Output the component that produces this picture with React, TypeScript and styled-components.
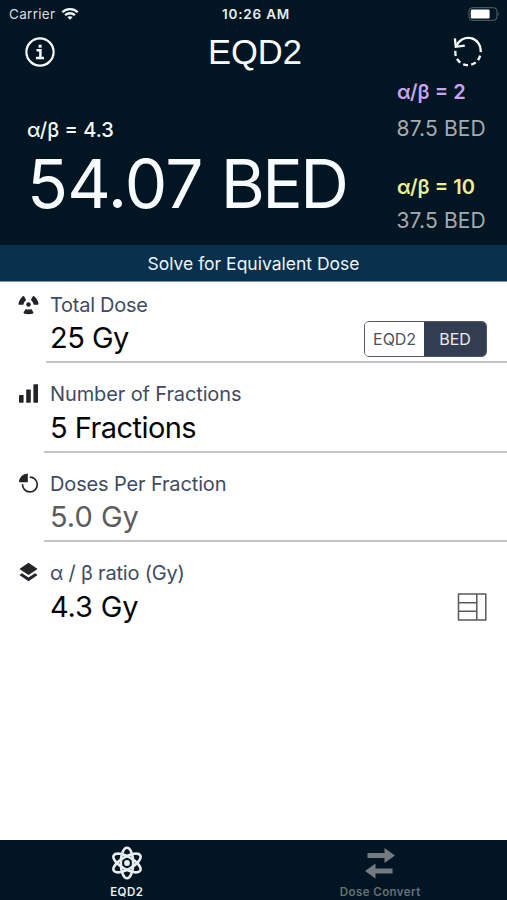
import React from 'react';
import styled, { createGlobalStyle } from 'styled-components';

const Global = createGlobalStyle`
  body { margin: 0; background: #fff; }
  * { box-sizing: border-box; }
`;

const Screen = styled.div`
  width: 507px;
  height: 900px;
  display: flex;
  flex-direction: column;
  overflow: hidden;
  background: #fff;
  font-family: Inter, sans-serif;
  font-kerning: normal;
  white-space: nowrap;
`;

const Top = styled.header`
  background: #021522;
  color: #f8fbfd;
`;

const StatusBar = styled.div`
  height: 28px;
  padding: 0 7px 0 9px;
  display: grid;
  grid-template-columns: 1fr auto 1fr;
  align-items: center;
  font-size: 13.5px;
  line-height: 28px;
`;

const Carrier = styled.span`
  display: flex;
  align-items: center;
  gap: 6px;
  letter-spacing: 0.3px;
  color: #d6dde1;
`;

const Clock = styled.span`
  padding-left: 3px;
  font-weight: 600;
  letter-spacing: 0.82px;
  color: #e6ecef;
`;

const Battery = styled.span`
  display: flex;
  justify-content: flex-end;
`;

const NavBar = styled.div`
  height: 48px;
  padding: 0 23px 0 24px;
  display: grid;
  grid-template-columns: 32px 1fr 32px;
  align-items: center;
`;

const Title = styled.h1`
  margin: 0;
  padding-left: 2px;
  font-family: "Liberation Sans", sans-serif;
  font-size: 34.5px;
  line-height: 48px;
  font-weight: 400;
  text-align: center;
`;

const IconButton = styled.button`
  width: 32px;
  height: 32px;
  padding: 0;
  border: 0;
  background: none;
  color: inherit;
  svg { display: block; }
`;

const Results = styled.section`
  height: 169px;
  display: grid;
  grid-template-columns: 370px 1fr;
  padding-left: 27px;
`;

const MainResult = styled.div`
  padding-top: 42px;
`;

const SideResults = styled.div`
  padding-top: 4px;
`;

const SideResult = styled.div<{ $gap: number }>`
  display: flex;
  flex-direction: column;
  gap: ${(p) => p.$gap}px;
  & + & { margin-top: 34px; }
`;

const RatioLabel = styled.div<{ $color?: string }>`
  font-size: 20px;
  line-height: 24px;
  font-weight: ${(p) => (p.$color ? 600 : 500)};
  color: ${(p) => p.$color ?? '#f4f8fa'};
`;

const MainValue = styled.div`
  margin-top: 2px;
  font-size: 67.5px;
  line-height: 80px;
  letter-spacing: -0.8px;
`;

const Unit = styled.span`
  letter-spacing: -2.6px;
`;

const SideValue = styled.div`
  margin-left: -0.5px;
  font-size: 21px;
  line-height: 24px;
  letter-spacing: 0.15px;
  color: #a6abae;
`;

const Banner = styled.div`
  height: 37px;
  background: #07304d;
  border-bottom: 1px solid #7f93a3;
  color: #eef4f8;
  font-size: 17.5px;
  line-height: 37px;
  text-align: center;
`;

const Form = styled.main`
  flex: 1;
  min-height: 0;
`;

const Row = styled.div<{ $first?: boolean }>`
  height: ${(p) => (p.$first ? 81 : 89.6)}px;
  display: grid;
  grid-template-columns: ${(p) => (p.$first ? 46 : 44)}px 1fr;
  align-items: end;
`;

const RowIcon = styled.div`
  height: 69.5px;
  padding-left: 18px;
  color: #222428;
  svg { display: block; }
`;

const RowBody = styled.div<{ $first?: boolean; $last?: boolean }>`
  padding: 0 20px 6px ${(p) => (p.$first ? 4 : 6)}px;
  border-bottom: 2px solid ${(p) => (p.$last ? 'transparent' : '#c4c4c6')};
`;

const Label = styled.div<{ $track: number }>`
  font-size: 20px;
  line-height: 24px;
  letter-spacing: ${(p) => p.$track}px;
  color: #3f4b62;
`;

const ValueLine = styled.div`
  height: 34px;
  margin-top: 4.5px;
  display: flex;
  justify-content: space-between;
  align-items: center;
`;

const Value = styled.div<{ $track: number; $muted?: boolean }>`
  font-size: 29px;
  line-height: 34px;
  letter-spacing: ${(p) => p.$track}px;
  color: ${(p) => (p.$muted ? '#5c5c5c' : '#050505')};
`;

const Segmented = styled.div`
  width: 123px;
  height: 36px;
  margin-top: 2px;
  display: grid;
  grid-template-columns: 59px 1fr;
  border: 1.5px solid #50586a;
  border-radius: 5px;
  overflow: hidden;
`;

const Segment = styled.button<{ $active?: boolean }>`
  border: 0;
  padding: 0;
  font: 400 16px/33px Inter, sans-serif;
  letter-spacing: -0.1px;
  background: ${(p) => (p.$active ? '#333d51' : '#fff')};
  color: ${(p) => (p.$active ? '#e9ecf2' : '#4b5263')};
`;

const TabBar = styled.nav`
  height: 60px;
  display: grid;
  grid-template-columns: 1fr 1fr;
  background: #021522;
`;

const Tab = styled.div<{ $active?: boolean }>`
  padding-top: 5px;
  display: flex;
  flex-direction: column;
  align-items: center;
  font-size: 11.5px;
  line-height: 14px;
  font-weight: 600;
  letter-spacing: 0.43px;
  color: ${(p) => (p.$active ? '#e8edf0' : '#667078')};
  svg { display: block; margin-bottom: 4px; }
`;

const WifiIcon = () => (
  <svg width="18" height="14" viewBox="0 0 18 14" fill="none" stroke="#f4f8fa" strokeWidth="2.3">
    <path d="M1.3 5.2C5.6 1 12.4 1 16.7 5.2M4.1 8.2C6.9 5.6 11.1 5.6 13.9 8.2" />
    <path d="M9 12.8L6.3 10.1C7.8 8.8 10.2 8.8 11.7 10.1Z" fill="#f4f8fa" stroke="none" />
  </svg>
);

const BatteryIcon = () => (
  <svg width="32" height="14" viewBox="0 0 32 14">
    <rect x="1" y="0.7" width="28" height="12.6" rx="3.5" fill="none" stroke="#59666f" />
    <rect x="2.8" y="2.4" width="18.8" height="9.2" rx="1.4" fill="#fff" />
    <path d="M30 4.8Q31.6 7 30 9.2Z" fill="#59666f" />
  </svg>
);

const InfoIcon = () => (
  <svg width="32" height="32" viewBox="0 0 32 32" fill="none" stroke="currentColor">
    <circle cx="16" cy="16" r="13.6" strokeWidth="2.2" />
    <path d="M12.5 14.3H16.4V21.6M12 22H20" strokeWidth="2.5" />
    <rect x="14.6" y="8.7" width="3" height="3" fill="currentColor" stroke="none" />
  </svg>
);

const ResetIcon = () => (
  <svg width="32" height="32" viewBox="0 0 32 32" fill="none" stroke="currentColor" strokeWidth="2.3">
    <path d="M2.9 2.4L3.8 10.8L12.8 9.6" />
    <path d="M4.2 10.4A12.6 12.6 0 0 1 28.6 16.2" />
    <path d="M28.1 19.6A12.6 12.6 0 0 1 3.4 14.8" strokeDasharray="5 3.2" />
  </svg>
);

const RadiationIcon = () => (
  <svg width="21" height="21" viewBox="-10.5 -10.5 21 21" fill="currentColor">
    <circle r="2.3" />
    {[0, 120, 240].map((angle) => (
      <path key={angle} transform={`rotate(${angle})`} d="M-2.8 4.4Q0 5.6 2.8 4.4L5 8.1Q5.1 9.6 0 9.8Q-5.1 9.6 -5 8.1Z" />
    ))}
  </svg>
);

const BarsIcon = () => (
  <svg width="21" height="21" viewBox="0 0 21 21" fill="currentColor">
    <rect x="1" y="12" width="4.6" height="7.8" rx="0.7" />
    <rect x="8.2" y="6.5" width="4.6" height="13.3" rx="0.7" />
    <rect x="15.4" y="1.3" width="4.6" height="18.5" rx="0.7" />
  </svg>
);

const PieIcon = () => (
  <svg width="21" height="21" viewBox="0 0 21 21">
    <path d="M9.8 0.6V9.2H1A8.8 8.6 0 0 1 9.8 0.6Z" fill="currentColor" />
    <path d="M11.8 4.1A7.4 7.4 0 1 1 4.5 11.2" fill="none" stroke="currentColor" strokeWidth="1.7" />
  </svg>
);

const LayersIcon = () => (
  <svg width="21" height="21" viewBox="0 0 21 21" fill="currentColor">
    <path d="M10.5 0.7L19.6 6.9L10.5 13.1L1.4 6.9Z" />
    <path d="M1.4 13L4 11.3L10.5 15.6L17 11.3L19.6 13L10.5 19.2Z" />
  </svg>
);

const TableIcon = () => (
  <svg width="30" height="28" viewBox="0 0 30 28" fill="none" stroke="#5a5a5c" strokeWidth="1.5">
    <path d="M1.5 1H28.8V27H1.5ZM19.8 1V27M1.5 9.8H19.8M1.5 18.2H19.8" />
  </svg>
);

const AtomIcon = () => (
  <svg width="36" height="36" viewBox="-18 -18 36 36" fill="none" stroke="currentColor" strokeWidth="2.6">
    {[30, 90, 150].map((angle) => (
      <ellipse key={angle} rx="15.3" ry="6.2" transform={`rotate(${angle})`} />
    ))}
    <circle r="2.9" fill="currentColor" stroke="none" />
  </svg>
);

const ConvertIcon = () => (
  <svg width="32" height="36" viewBox="0 0 32 36" fill="#747b80">
    <path d="M3.5 8H20.5V3L31 10.5L20.5 18V13H3.5Z" />
    <path d="M28.5 23.5H11.5V18.5L1 26L11.5 33.5V28.5H28.5Z" />
  </svg>
);

export default function App() {
  return (
    <Screen>
      <Global />
      <Top>
        <StatusBar>
          <Carrier>Carrier<WifiIcon /></Carrier>
          <Clock>10:26 AM</Clock>
          <Battery><BatteryIcon /></Battery>
        </StatusBar>
        <NavBar>
          <IconButton aria-label="Information"><InfoIcon /></IconButton>
          <Title>EQD2</Title>
          <IconButton aria-label="Reset"><ResetIcon /></IconButton>
        </NavBar>
        <Results>
          <MainResult>
            <RatioLabel>α/β = 4.3</RatioLabel>
            <MainValue>54.07 <Unit>BED</Unit></MainValue>
          </MainResult>
          <SideResults>
            <SideResult $gap={13}>
              <RatioLabel $color="#c9a5ee">α/β = 2</RatioLabel>
              <SideValue>87.5 BED</SideValue>
            </SideResult>
            <SideResult $gap={10}>
              <RatioLabel $color="#ebf096">α/β = 10</RatioLabel>
              <SideValue>37.5 BED</SideValue>
            </SideResult>
          </SideResults>
        </Results>
      </Top>
      <Banner>Solve for Equivalent Dose</Banner>
      <Form>
        <Row $first>
          <RowIcon><RadiationIcon /></RowIcon>
          <RowBody $first>
            <Label $track={-0.27}>Total Dose</Label>
            <ValueLine>
              <Value $track={-0.5}>25 Gy</Value>
              <Segmented>
                <Segment>EQD2</Segment>
                <Segment $active>BED</Segment>
              </Segmented>
            </ValueLine>
          </RowBody>
        </Row>
        <Row>
          <RowIcon><BarsIcon /></RowIcon>
          <RowBody>
            <Label $track={-0.12}>Number of Fractions</Label>
            <ValueLine><Value $track={-0.55}>5 Fractions</Value></ValueLine>
          </RowBody>
        </Row>
        <Row>
          <RowIcon><PieIcon /></RowIcon>
          <RowBody>
            <Label $track={-0.14}>Doses Per Fraction</Label>
            <ValueLine><Value $track={0} $muted>5.0 Gy</Value></ValueLine>
          </RowBody>
        </Row>
        <Row>
          <RowIcon><LayersIcon /></RowIcon>
          <RowBody $last>
            <Label $track={-0.2}>α / β ratio (Gy)</Label>
            <ValueLine>
              <Value $track={-0.15}>4.3 Gy</Value>
              <TableIcon />
            </ValueLine>
          </RowBody>
        </Row>
      </Form>
      <TabBar>
        <Tab $active><AtomIcon />EQD2</Tab>
        <Tab><ConvertIcon />Dose Convert</Tab>
      </TabBar>
    </Screen>
  );
}
